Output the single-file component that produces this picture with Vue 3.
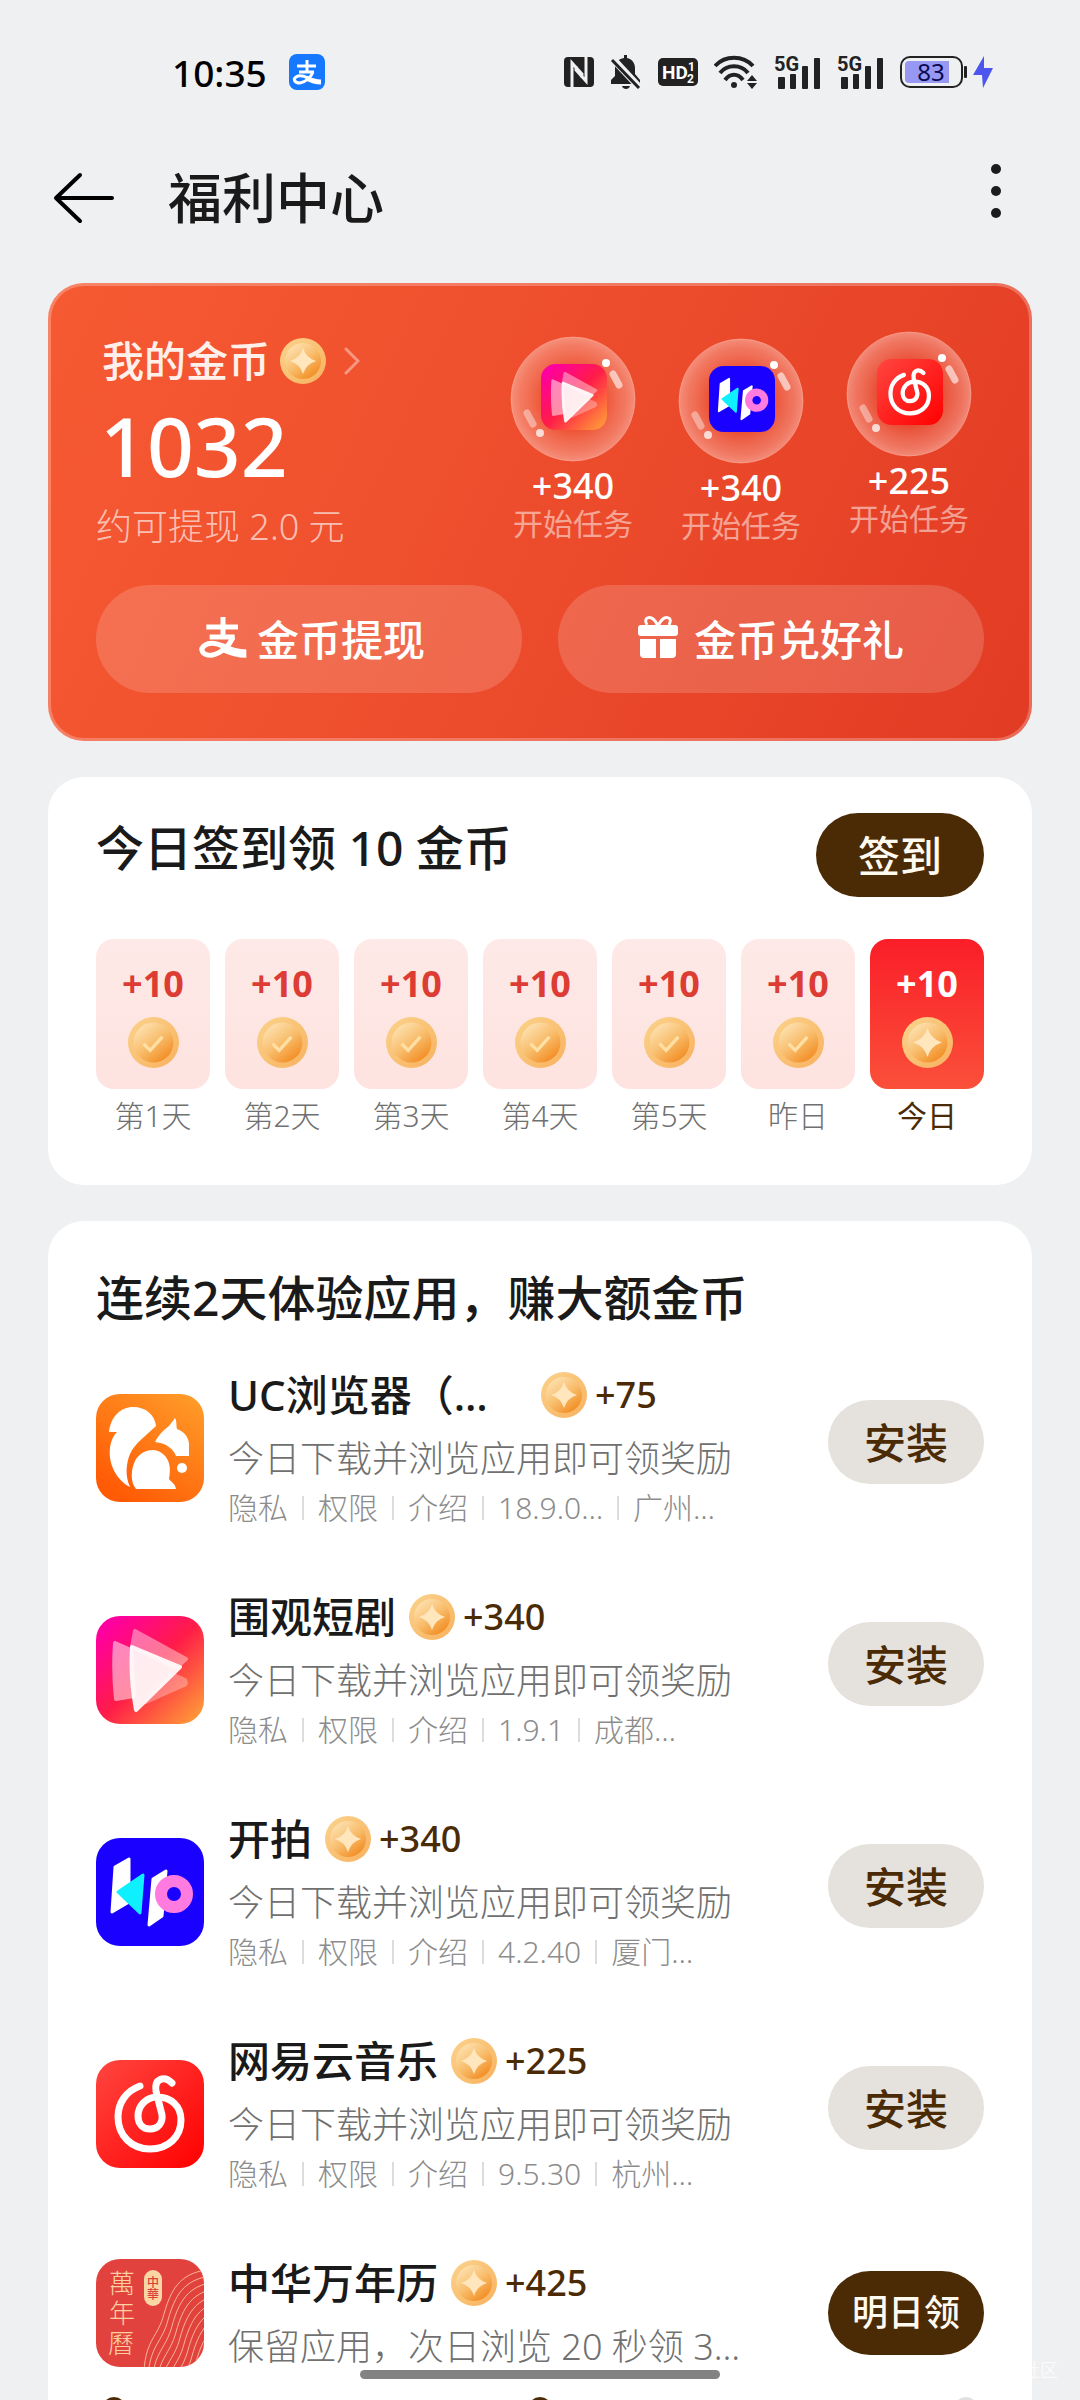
<template>
  <div class="page">
    <!-- Shared shapes -->
    <svg class="sprite" aria-hidden="true">
      <defs>
        <linearGradient id="coin-rim" x1="0" y1="0" x2="1" y2="1">
          <stop offset="0" stop-color="#fbd38c" />
          <stop offset="1" stop-color="#f8b15e" />
        </linearGradient>
        <linearGradient id="coin-face" x1="0.15" y1="0.1" x2="0.8" y2="0.95">
          <stop offset="0" stop-color="#fde0ae" />
          <stop offset="0.5" stop-color="#f8bd6c" />
          <stop offset="1" stop-color="#f28c22" />
        </linearGradient>
        <linearGradient id="uc-bg" x1="1" y1="0" x2="0.3" y2="1">
          <stop offset="0" stop-color="#ff9f2a" />
          <stop offset="1" stop-color="#ff5a05" />
        </linearGradient>
        <linearGradient id="drama-bg" x1="0" y1="0" x2="1" y2="1">
          <stop offset="0.1" stop-color="#ff00a0" />
          <stop offset="0.5" stop-color="#ff1c48" />
          <stop offset="0.95" stop-color="#ff9a38" />
        </linearGradient>
        <linearGradient id="music-bg" x1="0" y1="0" x2="1" y2="1">
          <stop offset="0" stop-color="#ff4640" />
          <stop offset="1" stop-color="#ff0000" />
        </linearGradient>
        <radialGradient id="bubble-fill">
          <stop offset="0.45" stop-color="#fff" stop-opacity="0" />
          <stop offset="0.85" stop-color="#ffd8d0" stop-opacity="0.32" />
          <stop offset="1" stop-color="#ffe0da" stop-opacity="0.45" />
        </radialGradient>
        <clipPath id="app-clip"><rect width="108" height="108" rx="24" /></clipPath>
      </defs>

      <symbol id="coin-star" viewBox="0 0 46 46">
        <circle cx="23" cy="23" r="23" fill="url(#coin-rim)" />
        <circle cx="23" cy="23" r="18" fill="url(#coin-face)" />
        <path d="M23 10Q26 20 36 23Q26 26 23 36Q20 26 10 23Q20 20 23 10Z" fill="#ffe6bd" />
      </symbol>
      <symbol id="coin-check" viewBox="0 0 46 46">
        <circle cx="23" cy="23" r="23" fill="url(#coin-rim)" />
        <circle cx="23" cy="23" r="18" fill="url(#coin-face)" />
        <path d="M14 24L20 30L31 18" fill="none" stroke="#ffdfa4" stroke-width="3" />
      </symbol>
      <symbol id="pay" viewBox="0 0 36 36">
        <g fill="none" stroke="currentColor" stroke-linejoin="round">
          <path d="M8 12H27M18 6V17M10 18H25" stroke-width="3" />
          <path d="M24 18C22 23 17 28 11 29C5 29 4 25 7 23C10 21 15 22 19 24" stroke-width="3" />
          <path d="M17 24C21 26 26 28 32 28" stroke-width="5" />
        </g>
      </symbol>

      <symbol id="app-uc" viewBox="0 0 108 108">
        <rect width="108" height="108" rx="24" fill="url(#uc-bg)" />
        <g fill="#fff">
          <path d="M13 38C15 22 25 13 37 13C50 13 59 21 60 32C52 40 38 50 34 60C30 70 29 82 34 93C20 86 12 69 14 54C15 47 17 42 21 38Z" />
          <path d="M59 48C63 40 68 36 73 32L79 24C81 27 80 31 81 35C89 38 93 44 93 51V62H80C78 56 71 49 59 48Z" />
          <path d="M40 95C34 88 35 75 39 67C44 57 58 52 67 60C74 66 75 74 73 85C75 88 79 89 80 95Z" />
          <circle cx="86" cy="74" r="5" />
        </g>
      </symbol>
      <symbol id="app-drama" viewBox="0 0 108 108">
        <rect width="108" height="108" rx="24" fill="url(#drama-bg)" />
        <g fill="#fff" stroke="#fff" stroke-width="4" stroke-linejoin="round">
          <path d="M39 15L90 43L80 52L36 31Z" opacity="0.4" />
          <path d="M19 27L35 34L38 80L20 83Q17 55 19 27Z" opacity="0.5" />
          <path d="M76 58L89 64Q91 68 88 69L50 86Z" opacity="0.3" />
          <path d="M36 31L84 51L40 94Q34 62 36 31Z" opacity="0.92" />
        </g>
      </symbol>
      <symbol id="app-kp" viewBox="0 0 108 108">
        <rect width="108" height="108" rx="24" fill="#1a00ff" />
        <g stroke-width="3" stroke-linejoin="round">
          <path d="M19 29L33 21V64L16 74Z" fill="#fff" stroke="#fff" />
          <path d="M22 54L47 37L44 75Z" fill="#0ff0ff" stroke="#0ff0ff" />
          <path d="M57 41L70 33L66 78L53 87Z" fill="#fff" stroke="#fff" />
        </g>
        <circle cx="78" cy="56" r="13" fill="none" stroke="#ff7be0" stroke-width="12" />
      </symbol>
      <symbol id="app-music" viewBox="0 0 108 108">
        <rect width="108" height="108" rx="24" fill="url(#music-bg)" />
        <path
          d="M44 26C30 31 22 43 22 57C22 76 36 89 54 89C72 89 85 77 85 60C85 46 75 37 61 37C50 37 42 46 42 56C42 64 47 69 54 69C62 69 67 63 66 55L60 31C58 19 68 15 76 23"
          fill="none" stroke="#fff" stroke-width="7" stroke-linecap="round"
        />
      </symbol>
    </svg>

    <!-- Status bar -->
    <div class="status-bar">
      <span class="clock">10:35</span>
      <span class="pay-badge"><svg width="36" height="36"><use href="#pay" /></svg></span>
      <div class="status-icons">
        <svg width="30" height="30" viewBox="0 0 30 30">
          <rect width="30" height="30" rx="4" fill="#222" />
          <path d="M8 30V6L18 17V21M22 0V24L12 13V9" fill="none" stroke="#eff1f3" stroke-width="3" />
        </svg>
        <svg width="32" height="34" viewBox="0 0 32 34" fill="#222">
          <path d="M14 0h3v3C22 4 25 8 25 13V19L30 25V29H1V25L5 21V13C5 8 8 4 14 3Z" />
          <path d="M12 31H20C19 35 13 35 12 31Z" />
          <path d="M2 3L30 33" stroke="#eff1f3" stroke-width="7" />
          <path d="M2 5L29 33" stroke="#222" stroke-width="3" />
        </svg>
        <svg width="40" height="28" viewBox="0 0 40 28">
          <rect width="40" height="28" rx="5" fill="#222" />
          <g fill="#fff" font-family="Roboto, sans-serif" font-weight="700">
            <text x="4" y="21" font-size="19">HD</text>
            <text x="30" y="13" font-size="12">1</text>
            <text x="29" y="25" font-size="12">2</text>
          </g>
        </svg>
        <svg width="44" height="34" viewBox="0 0 44 34">
          <g fill="none" stroke="#222" stroke-width="4">
            <path d="M1 11C11 0 29 0 39 11" />
            <path d="M6 18C13 9 27 9 34 18" />
            <path d="M11 25C16 18 24 18 29 25" />
          </g>
          <circle cx="20" cy="30" r="3" fill="#222" />
          <path d="M33 26L38 20L43 26ZM33 28L38 34L43 28Z" fill="#222" />
        </svg>
        <svg v-for="sim in 2" :key="sim" width="47" height="33" viewBox="0 0 47 33" fill="#222">
          <text x="0" y="15" font-size="20" font-family="Roboto, sans-serif" font-weight="700">5G</text>
          <rect x="4" y="21" width="7" height="12" rx="1" />
          <rect x="16" y="18" width="6" height="15" rx="1" />
          <rect x="28" y="10" width="6" height="23" rx="1" />
          <rect x="40" y="2" width="6" height="31" rx="1" />
        </svg>
        <svg width="67" height="32" viewBox="0 0 67 32">
          <rect x="1" y="1" width="61" height="30" rx="9" fill="none" stroke="#222" stroke-width="2" />
          <path d="M9 5H49V27H9Q5 27 5 23V9Q5 5 9 5Z" fill="#9797f4" />
          <rect x="64" y="10" width="3" height="12" rx="1" fill="#222" />
          <text x="31" y="25" font-size="24" text-anchor="middle" fill="#0a0a50" font-family="'Noto Sans', sans-serif">83</text>
        </svg>
        <svg width="20" height="32" viewBox="0 0 20 32">
          <path d="M11 0L0 19H9L10 32L20 12H11Z" fill="#4c55ee" />
        </svg>
      </div>
    </div>

    <!-- Title bar -->
    <header class="title-bar">
      <button class="icon-button" aria-label="返回">
        <svg width="62" height="52" viewBox="0 0 62 52" fill="none" stroke="#000" stroke-width="4" stroke-linecap="round" stroke-linejoin="round">
          <path d="M27 3L3 26L27 49M3 26H59" />
        </svg>
      </button>
      <h1>福利中心</h1>
      <button class="icon-button more" aria-label="更多">
        <svg width="12" height="56" viewBox="0 0 12 56" fill="#1c1c1c">
          <circle cx="6" cy="6" r="5" />
          <circle cx="6" cy="28" r="5" />
          <circle cx="6" cy="50" r="5" />
        </svg>
      </button>
    </header>

    <main class="content">
      <!-- Balance -->
      <section class="balance">
        <div class="balance-top">
          <div class="balance-info">
            <a href="#coins" class="balance-label">
              我的金币
              <svg class="coin"><use href="#coin-star" /></svg>
              <svg class="chevron" width="16" height="28" viewBox="0 0 16 28" fill="none" stroke="#fff" stroke-width="3" stroke-linecap="round">
                <path d="M2 2L14 14L2 26" />
              </svg>
            </a>
            <strong class="balance-value">1032</strong>
            <span class="balance-cash">约可提现 2.0 元</span>
          </div>
          <div class="bubbles">
            <a
              v-for="bubble in bubbles" :key="bubble.icon"
              href="#task" class="bubble" :style="{ marginTop: bubble.drift + 'px' }"
            >
              <svg width="126" height="126" viewBox="0 0 126 126">
                <circle cx="63" cy="63" r="62" fill="url(#bubble-fill)" stroke="#ffb5a6" stroke-opacity="0.5" stroke-width="1" />
                <use :href="'#' + bubble.icon" x="31" y="28" width="66" height="66" />
                <g fill="none" stroke="#fff" stroke-linecap="round">
                  <path d="M103 38L109 49" stroke-width="7" opacity="0.6" />
                  <path d="M17 77L23 88" stroke-width="7" opacity="0.4" />
                </g>
                <circle cx="96" cy="27" r="4" fill="#fff" />
                <circle cx="30" cy="97" r="4" fill="#fff" opacity="0.75" />
              </svg>
              <span class="bubble-reward">+{{ bubble.reward }}</span>
              <span class="bubble-text">开始任务</span>
            </a>
          </div>
        </div>
        <div class="balance-actions">
          <button class="glass-button">
            <svg width="60" height="60"><use href="#pay" /></svg>
            金币提现
          </button>
          <button class="glass-button gift">
            <svg width="40" height="44" viewBox="0 0 40 44" fill="#fff">
              <path d="M20 11C14 -2 4 2 9 10M20 11C26 -2 36 2 31 10" fill="none" stroke="#fff" stroke-width="3" />
              <rect y="10" width="40" height="11" rx="3" />
              <path d="M2 24H18V43H6Q2 43 2 39Z" />
              <path d="M22 24H38V39Q38 43 34 43H22Z" />
            </svg>
            金币兑好礼
          </button>
        </div>
      </section>

      <!-- Daily check-in -->
      <section class="card checkin">
        <div class="checkin-header">
          <h2>今日签到领 10 金币</h2>
          <button class="pill dark wide">签到</button>
        </div>
        <ol class="days">
          <li v-for="day in days" :key="day" :class="{ today: day === '今日' }">
            <div class="day-tile">
              <span>+10</span>
              <svg class="day-coin"><use :href="day === '今日' ? '#coin-star' : '#coin-check'" /></svg>
            </div>
            <span class="day-label">{{ day }}</span>
          </li>
        </ol>
      </section>

      <!-- App tasks -->
      <section class="card tasks">
        <h2>连续2天体验应用，赚大额金币</h2>
        <ul class="task-list">
          <li v-for="task in tasks" :key="task.name" class="task">
            <svg v-if="task.icon" class="app-icon"><use :href="'#' + task.icon" /></svg>
            <svg v-else class="app-icon" viewBox="0 0 108 108">
              <g clip-path="url(#app-clip)">
                <rect width="108" height="108" fill="#e2423d" />
                <g fill="none" stroke="#f8b596" stroke-width="1">
                  <path
                    v-for="n in 12" :key="n"
                    :transform="`translate(${(n - 1) * 4} ${(n - 1) * 6})`"
                    d="M48 112C50 80 62 78 68 55C75 30 84 15 110 11"
                  />
                </g>
                <rect x="48" y="11" width="18" height="36" rx="9" fill="#fbd6a4" />
              </g>
              <g text-anchor="middle" font-family="'Noto Sans CJK TC', sans-serif">
                <g fill="#fbd0a0" font-size="26" font-weight="300">
                  <text x="26" y="34">萬</text>
                  <text x="26" y="64">年</text>
                  <text x="25" y="94">曆</text>
                </g>
                <g fill="#d8403a" font-size="12">
                  <text x="57" y="28">中</text>
                  <text x="57" y="40">華</text>
                </g>
              </g>
            </svg>
            <div class="task-body">
              <div class="task-title">
                <h3 :class="{ clipped: task.clipped }">{{ task.name }}</h3>
                <svg class="coin"><use href="#coin-star" /></svg>
                <span class="reward">+{{ task.reward }}</span>
              </div>
              <p class="task-desc">{{ task.desc }}</p>
              <div v-if="task.version" class="task-meta">
                <a href="#privacy">隐私</a>
                <a href="#permissions">权限</a>
                <a href="#about">介绍</a>
                <span>{{ task.version }}</span>
                <span>{{ task.vendor }}</span>
              </div>
            </div>
            <button v-if="task.version" class="pill install">安装</button>
            <button v-else class="pill dark small">明日领</button>
          </li>
        </ul>
        <div class="steps">
          <span class="step done"></span>
          <span class="step done"></span>
          <span class="step"></span>
        </div>
      </section>
    </main>

    <span class="watermark">社区</span>
    <div class="home-indicator"></div>
  </div>
</template>

<script setup>
const bubbles = [
  { icon: 'app-drama', reward: 340, drift: 5 },
  { icon: 'app-kp', reward: 340, drift: 7 },
  { icon: 'app-music', reward: 225, drift: 0 }
];

const days = ['第1天', '第2天', '第3天', '第4天', '第5天', '昨日', '今日'];

const dailyDesc = '今日下载并浏览应用即可领奖励';

const tasks = [
  { icon: 'app-uc', name: 'UC浏览器（…', clipped: true, reward: 75, desc: dailyDesc, version: '18.9.0…', vendor: '广州…' },
  { icon: 'app-drama', name: '围观短剧', reward: 340, desc: dailyDesc, version: '1.9.1', vendor: '成都…' },
  { icon: 'app-kp', name: '开拍', reward: 340, desc: dailyDesc, version: '4.2.40', vendor: '厦门…' },
  { icon: 'app-music', name: '网易云音乐', reward: 225, desc: dailyDesc, version: '9.5.30', vendor: '杭州…' },
  // The calendar icon carries lettering, so it is drawn in place
  { name: '中华万年历', reward: 425, desc: '保留应用，次日浏览 20 秒领 3…' }
];
</script>

<style>
body {
  background: #eff0f2;
}
</style>

<style scoped>
.page {
  position: relative;
  display: flex;
  flex-direction: column;
  height: 100vh;
  overflow: hidden;
  background: #eff0f2;
  color: #1a1a1a;
  font-family: 'Noto Sans', 'Noto Sans CJK SC', sans-serif;
}

.page *,
.page *::before {
  box-sizing: border-box;
}

.sprite {
  position: absolute;
  width: 0;
  height: 0;
}

svg {
  display: block;
  flex: none;
}

a {
  color: inherit;
  text-decoration: none;
}

button {
  padding: 0;
  border: 0;
  background: none;
  color: inherit;
  font: inherit;
  cursor: pointer;
}

h1,
h2,
h3,
p,
ul,
ol {
  margin: 0;
  padding: 0;
  font-weight: 500;
  list-style: none;
}

/* Status bar */
.status-bar {
  display: flex;
  align-items: center;
  flex: none;
  height: 144px;
  padding: 0 87px 0 172px;
}

.clock {
  color: #000;
  font-size: 37px;
  font-weight: 500;
}

.pay-badge {
  margin-left: 22px;
  border-radius: 8px;
  background: #1677ff;
  color: #fff;
}

.status-icons {
  display: flex;
  align-items: center;
  gap: 16px;
  margin-left: auto;
}

.status-icons svg:last-child {
  margin-left: -10px;
}

/* Title bar */
.title-bar {
  display: flex;
  align-items: center;
  flex: none;
  height: 108px;
  margin-bottom: 31px;
  padding: 0 78px 0 53px;
}

.title-bar h1 {
  margin-left: 53px;
  font-size: 54px;
  line-height: 72px;
}

.more {
  margin-left: auto;
  padding-bottom: 14px;
}

.content {
  display: flex;
  flex-direction: column;
  flex: 1;
  gap: 36px;
  min-height: 0;
  padding: 0 48px;
  overflow: hidden;
}

.content > section {
  flex: none;
}

/* Balance */
.balance {
  padding: 48px;
  border-radius: 36px;
  background: linear-gradient(115deg, #f65a32 0%, #ee4e2d 45%, #e23b24 100%);
  box-shadow: inset 0 0 0 3px rgba(255, 255, 255, 0.25);
  color: #fff;
}

.balance-top {
  display: flex;
  justify-content: space-between;
  padding-right: 12px;
}

.balance-info {
  display: flex;
  flex-direction: column;
}

.balance-label {
  display: flex;
  align-items: center;
  padding-left: 6px;
  color: #fff0ec;
  font-size: 42px;
  font-weight: 500;
  line-height: 60px;
}

.coin {
  width: 46px;
  height: 46px;
}

.balance-label .coin {
  margin: 0 18px 0 10px;
}

.chevron {
  opacity: 0.4;
}

.balance-value {
  margin-top: 12px;
  padding-left: 4px;
  font-size: 82px;
  font-weight: 500;
  line-height: 84px;
}

.balance-cash {
  margin-top: 16px;
  color: rgba(255, 255, 255, 0.65);
  font-size: 36px;
  font-weight: 300;
  line-height: 48px;
}

.bubbles {
  display: flex;
  align-items: flex-start;
  gap: 42px;
}

.bubble {
  display: flex;
  flex-direction: column;
  align-items: center;
  width: 126px;
}

.bubble-reward {
  margin-top: 6px;
  font-size: 36px;
  font-weight: 500;
  line-height: 36px;
}

.bubble-text {
  color: rgba(255, 255, 255, 0.5);
  font-size: 30px;
  line-height: 40px;
}

.balance-actions {
  display: flex;
  gap: 36px;
  margin-top: 34px;
}

.glass-button {
  display: flex;
  align-items: center;
  justify-content: center;
  flex: 1;
  gap: 4px;
  height: 108px;
  padding-bottom: 4px;
  border-radius: 54px;
  background: rgba(255, 255, 255, 0.16);
  font-size: 42px;
  font-weight: 500;
}

.glass-button.gift {
  gap: 16px;
}

/* Cards */
.card {
  padding: 36px 48px;
  border-radius: 36px;
  background: #fff;
}

.card h2 {
  font-size: 48px;
  line-height: 70px;
}

.pill {
  flex: none;
  width: 156px;
  height: 84px;
  padding-bottom: 4px;
  border-radius: 42px;
  font-size: 42px;
  font-weight: 500;
}

.pill.dark {
  background: #4b2b06;
  color: #fffaf0;
}

.pill.wide {
  width: 168px;
}

.pill.small {
  font-size: 36px;
}

.pill.install {
  margin-bottom: 12px;
  background: #e5e1dc;
  color: #4b2b06;
}

/* Check-in */
.checkin-header {
  display: flex;
  align-items: flex-start;
  justify-content: space-between;
}

.days {
  display: flex;
  gap: 15px;
  margin-top: 42px;
}

.days li {
  display: flex;
  flex-direction: column;
  align-items: center;
  flex: 1;
  padding-bottom: 12px;
}

.day-tile {
  display: flex;
  flex-direction: column;
  align-items: center;
  align-self: stretch;
  height: 150px;
  padding-top: 24px;
  border-radius: 18px;
  background: linear-gradient(#fde9e7, #fee3e0);
  color: #dc3c34;
  font-size: 36px;
  font-weight: 700;
  line-height: 42px;
}

.today .day-tile {
  background: linear-gradient(#fa1e28, #fa503a);
  color: #fff;
}

.day-coin {
  width: 51px;
  height: 51px;
  margin-top: 12px;
}

.day-label {
  margin-top: 6px;
  color: #707070;
  font-size: 30px;
  font-weight: 300;
  line-height: 42px;
}

.today .day-label {
  color: #4b2b06;
  font-weight: 400;
}

/* Tasks */
.tasks {
  padding-top: 42px;
}

.task-list {
  display: flex;
  flex-direction: column;
  gap: 58px;
  margin-top: 33px;
}

.task {
  display: flex;
  align-items: center;
  gap: 24px;
}

.app-icon {
  width: 108px;
  height: 108px;
}

.task-body {
  flex: 1;
  min-width: 0;
  white-space: nowrap;
}

.task-title {
  display: flex;
  align-items: center;
  height: 60px;
  padding-bottom: 3px;
}

.task-title h3 {
  font-size: 42px;
  line-height: 56px;
}

.task-title h3.clipped {
  width: 300px;
}

.task-title .coin {
  margin: 0 8px 0 13px;
}

.reward {
  color: #4b2b06;
  font-size: 36px;
  font-weight: 500;
}

.task-desc {
  margin-top: 9px;
  color: #707070;
  font-size: 36px;
  font-weight: 300;
  line-height: 48px;
}

.task-meta {
  display: flex;
  align-items: center;
  margin-top: 3px;
  color: #8c8c8c;
  font-size: 30px;
  font-weight: 300;
  line-height: 44px;
}

.task-meta > * {
  display: flex;
  align-items: center;
}

.task-meta > * + *::before {
  width: 2px;
  height: 24px;
  margin: 0 14px;
  background: #dcdcdc;
  content: '';
}

.steps {
  display: flex;
  justify-content: space-between;
  margin-top: 26px;
  padding: 0 6px;
}

.step {
  width: 24px;
  height: 24px;
  border-radius: 50%;
  background: #e0e0e0;
}

.step.done {
  background: #4b2b06;
}

/* Overlays */
.watermark {
  position: absolute;
  right: 22px;
  bottom: 18px;
  color: rgba(255, 255, 255, 0.7);
  font-size: 18px;
  line-height: 24px;
}

.home-indicator {
  position: absolute;
  bottom: 21px;
  left: 50%;
  width: 33.333%;
  height: 9px;
  border-radius: 5px;
  background: #828282;
  transform: translateX(-50%);
}
</style>
